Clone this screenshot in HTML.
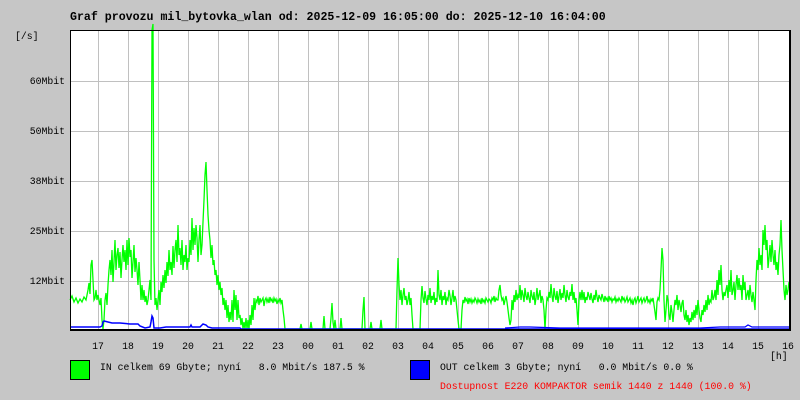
<!DOCTYPE html>
<html><head><meta charset="utf-8"><style>
body{margin:0;background:#c6c6c6;width:800px;height:400px;overflow:hidden;position:relative;font-family:"Liberation Mono",monospace;font-size:9.8px;color:#000}
.t{position:absolute;white-space:pre;line-height:12px}
.h{position:absolute;top:341px;line-height:12px;width:30px;text-align:center;margin-left:-15px}
.y{position:absolute;right:735px;line-height:12px}
</style></head><body>
<div class="t" style="left:70px;top:11px;font-weight:bold;font-size:11.6px;line-height:13px">Graf provozu mil_bytovka_wlan od: 2025-12-09 16:05:00 do: 2025-12-10 16:04:00</div>
<div class="t" style="left:15px;top:31px">[/s]</div>
<div class="y" style="top:76px">60Mbit</div>
<div class="y" style="top:126px">50Mbit</div>
<div class="y" style="top:176px">38Mbit</div>
<div class="y" style="top:226px">25Mbit</div>
<div class="y" style="top:276px">12Mbit</div>
<svg style="position:absolute;left:0;top:0" width="800" height="400">
<rect x="70" y="30" width="720" height="300" fill="#fff"/>
<g stroke="#c0c0c0" stroke-width="1">
<path d="M98.5 30V330M128.5 30V330M158.5 30V330M188.5 30V330M218.5 30V330M248.5 30V330M278.5 30V330M308.5 30V330M338.5 30V330M368.5 30V330M398.5 30V330M428.5 30V330M458.5 30V330M488.5 30V330M518.5 30V330M548.5 30V330M578.5 30V330M608.5 30V330M638.5 30V330M668.5 30V330M698.5 30V330M728.5 30V330M758.5 30V330"/>
<path d="M70 81.5H790M70 131.5H790M70 181.5H790M70 231.5H790M70 281.5H790"/>
</g>
<polyline fill="none" stroke="#00ff00" stroke-width="1.3" points="70,300 72,296 74,302 76,298 78,303 80,299 82,302 84,297 86,300 88,290 89,283 90,294 91,265 92,260 93,280 94,300 95,298 96,290 97,300 98,295 100,305 101,298 102,320 103,329 104,320 105,300 106,293 107,305 108,285 109,270 110,260 111,275 112,250 113,282 114,262 115,240 116,270 117,255 118,248 119,268 120,252 121,278 122,260 123,245 124,262 125,250 126,270 127,240 128,265 129,238 130,257 131,250 132,278 133,262 134,245 135,272 136,258 137,270 138,285 139,262 140,280 141,300 142,285 143,300 144,290 145,302 146,296 147,305 148,300 149,290 150,280 151,300 152,30 153,24 154,260 155,305 156,298 157,310 158,300 159,290 160,305 161,282 162,292 163,275 164,288 165,270 166,283 167,262 168,276 169,250 170,270 171,262 172,275 173,246 174,268 175,250 176,240 177,262 178,225 179,255 180,248 181,265 182,240 183,270 184,255 185,262 186,245 187,270 188,258 189,262 190,240 191,255 192,218 193,250 194,228 195,245 196,225 197,238 198,262 199,240 200,225 201,255 202,245 203,222 204,200 205,175 206,162 207,190 208,215 209,230 210,240 211,258 212,245 213,265 214,260 215,275 216,270 217,285 218,275 219,290 220,282 221,295 222,288 223,305 224,298 225,310 226,300 227,318 228,305 229,322 230,312 231,320 232,300 233,322 234,290 235,310 236,295 237,320 238,300 239,318 240,315 241,325 242,318 243,329 244,322 245,329 246,318 247,329 248,320 249,329 250,315 251,325 252,305 253,320 254,298 255,310 256,300 257,302 258,296 259,305 260,298 261,302 262,300 263,298 264,306 265,300 266,298 267,302 268,299 269,303 270,297 271,301 272,299 273,303 274,298 275,301 276,299 277,304 278,300 279,302 280,298 281,303 282,300 283,310 284,318 285,329 300,329 301,324 302,329 310,329 311,322 312,329 323,329 324,316 325,329 330,329 331,318 332,303 333,322 334,329 335,320 336,329 340,329 341,318 342,329 362,329 363,310 364,297 365,329 370,329 371,322 372,329 380,329 381,320 382,329 396,329 397,290 398,258 399,285 400,300 401,290 402,305 403,295 404,288 405,300 406,296 407,305 408,300 409,292 410,305 411,298 412,315 413,329 420,329 421,300 422,286 423,298 424,303 425,291 426,299 427,305 428,295 429,300 430,288 431,303 432,296 433,300 434,292 435,305 436,298 437,302 438,270 439,295 440,300 441,290 442,305 443,296 444,300 445,292 446,305 447,298 448,300 449,290 450,296 451,305 452,298 453,290 454,302 455,296 456,300 457,310 458,320 459,329 461,329 462,310 463,300 464,303 465,297 466,301 467,299 468,304 469,298 470,302 471,299 472,303 473,300 474,302 475,298 476,300 477,303 478,299 479,302 480,300 481,304 482,298 483,302 484,300 485,303 486,298 487,300 488,302 489,299 490,300 491,303 492,298 493,300 494,296 495,302 496,298 497,300 498,300 499,290 500,285 501,295 502,300 503,298 504,305 505,300 506,296 507,302 508,310 509,318 510,325 511,320 512,300 513,310 514,295 515,302 516,290 517,300 518,295 519,298 520,285 521,300 522,290 523,295 524,302 525,288 526,296 527,300 528,292 529,298 530,303 531,290 532,296 533,300 534,292 535,305 536,298 537,288 538,300 539,295 540,290 541,303 542,296 543,300 544,310 545,329 546,310 547,298 548,300 549,292 550,298 551,284 552,296 553,302 554,288 555,296 556,300 557,291 558,303 559,296 560,289 561,300 562,293 563,298 564,285 565,295 566,302 567,290 568,297 569,300 570,292 571,296 572,284 573,300 574,292 575,303 576,298 577,310 578,325 579,300 580,292 581,300 582,290 583,300 584,292 585,303 586,297 587,300 588,292 589,296 590,300 591,293 592,299 593,303 594,295 595,300 596,290 597,297 598,302 599,295 600,298 601,300 602,294 603,298 604,302 605,296 606,300 607,298 608,302 609,296 610,300 611,298 612,302 613,299 614,300 615,297 616,302 617,299 618,301 619,298 620,300 621,302 622,296 623,300 624,298 625,302 626,300 627,297 628,302 629,300 630,298 631,303 632,300 633,305 634,300 635,298 636,303 637,300 638,296 639,302 640,300 641,298 642,303 643,300 644,298 645,302 646,300 647,296 648,302 649,300 650,303 651,299 652,301 653,298 654,305 655,312 656,320 657,302 658,298 659,300 660,290 661,270 662,248 663,260 664,300 665,322 666,310 667,295 668,300 669,315 670,320 671,305 672,312 673,322 674,310 675,300 676,305 677,295 678,310 679,300 680,305 681,312 682,303 683,300 684,315 685,320 686,310 687,322 688,315 689,325 690,318 691,322 692,312 693,320 694,310 695,318 696,305 697,315 698,300 699,310 700,318 701,322 702,310 703,315 704,305 705,312 706,300 707,310 708,295 709,305 710,300 711,302 712,290 713,300 714,297 715,290 716,300 717,280 718,295 719,270 720,285 721,265 722,290 723,300 724,292 725,296 726,290 727,285 728,298 729,280 730,292 731,270 732,295 733,290 734,282 735,300 736,285 737,275 738,290 739,278 740,290 741,285 742,300 743,275 744,290 745,282 746,300 747,295 748,290 749,300 750,285 751,295 752,302 753,292 754,300 755,310 756,280 757,260 758,270 759,248 760,265 761,255 762,270 763,230 764,245 765,225 766,250 767,240 768,268 769,258 770,245 771,262 772,240 773,255 774,265 775,250 776,270 777,262 778,275 779,255 780,245 781,220 782,250 783,270 784,290 785,300 786,285 787,295 788,290 789,282"/>
<polyline fill="none" stroke="#0000ff" stroke-width="1.5" points="70,327 100,327 102,326 103,322 104,321 108,322 112,323 120,323 130,324 138,324 140,326 145,328 150,327 151,322 152,316 153,318 154,328 160,328 166,327 180,327 190,327 191,325 192,327 200,327 203,324 206,325 208,327 212,328 240,328 241,329 790,329"/>
<polyline fill="none" stroke="#0000ff" stroke-width="1.2" points="505,328 520,327 530,327 560,328 600,328 700,328 720,327 745,327 748,325 752,327 790,327"/>
<rect x="70.5" y="30.5" width="719" height="299" fill="none" stroke="#000" stroke-width="1"/>
<line x1="790" y1="30" x2="790" y2="331" stroke="#000" stroke-width="2"/>
<line x1="70" y1="330" x2="791" y2="330" stroke="#000" stroke-width="2"/>
<rect x="70.5" y="360.5" width="19" height="19" fill="#00ff00" stroke="#000"/>
<rect x="410.5" y="360.5" width="19" height="19" fill="#0000ff" stroke="#000"/>
</svg>
<div class="h" style="left:98px">17</div><div class="h" style="left:128px">18</div><div class="h" style="left:158px">19</div><div class="h" style="left:188px">20</div><div class="h" style="left:218px">21</div><div class="h" style="left:248px">22</div><div class="h" style="left:278px">23</div><div class="h" style="left:308px">00</div><div class="h" style="left:338px">01</div><div class="h" style="left:368px">02</div><div class="h" style="left:398px">03</div><div class="h" style="left:428px">04</div><div class="h" style="left:458px">05</div><div class="h" style="left:488px">06</div><div class="h" style="left:518px">07</div><div class="h" style="left:548px">08</div><div class="h" style="left:578px">09</div><div class="h" style="left:608px">10</div><div class="h" style="left:638px">11</div><div class="h" style="left:668px">12</div><div class="h" style="left:698px">13</div><div class="h" style="left:728px">14</div><div class="h" style="left:758px">15</div><div class="h" style="left:788px">16</div>
<div class="t" style="left:770px;top:351px">[h]</div>
<div class="t" style="left:100px;top:362px">IN celkem 69 Gbyte; nyní   8.0 Mbit/s 187.5 %</div>
<div class="t" style="left:440px;top:362px">OUT celkem 3 Gbyte; nyní   0.0 Mbit/s 0.0 %</div>
<div class="t" style="left:440px;top:381px;color:#ff0000">Dostupnost E220 KOMPAKTOR semik 1440 z 1440 (100.0 %)</div>
</body></html>
